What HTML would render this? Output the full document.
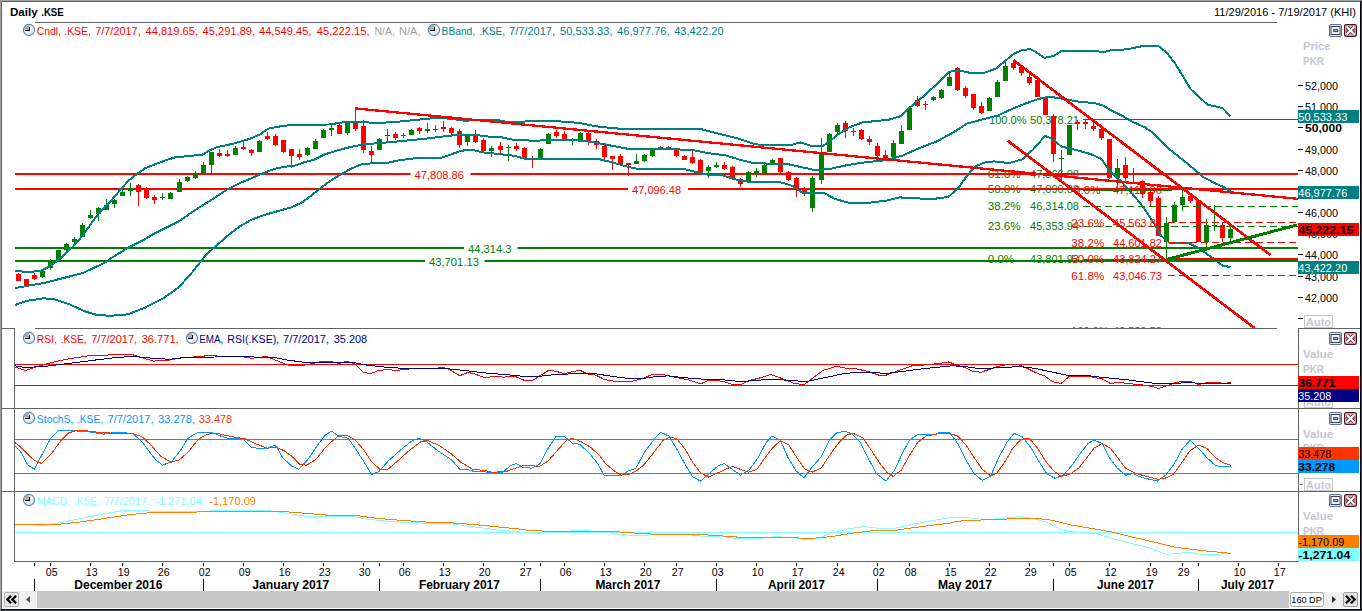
<!DOCTYPE html>
<html><head><meta charset="utf-8"><title>Daily .KSE</title>
<style>html,body{margin:0;padding:0;background:#fff;overflow:hidden}svg{display:block}</style></head>
<body>
<svg width="1362" height="611" viewBox="0 0 1362 611" font-family="&quot;Liberation Sans&quot;, sans-serif" font-size="11">
<rect x="0" y="0" width="1362" height="611" fill="#ffffff" />
<g shape-rendering="crispEdges">
<line x1="35" y1="22.5" x2="1277" y2="22.5" stroke="#626262" stroke-width="1"/>
<line x1="2" y1="328.5" x2="14" y2="328.5" stroke="#626262" stroke-width="1"/>
<line x1="35" y1="328.5" x2="1277" y2="328.5" stroke="#626262" stroke-width="1"/>
<line x1="1298" y1="328.5" x2="1360" y2="328.5" stroke="#626262" stroke-width="1"/>
<line x1="2" y1="408.5" x2="1360" y2="408.5" stroke="#626262" stroke-width="1"/>
<line x1="2" y1="491.5" x2="1360" y2="491.5" stroke="#626262" stroke-width="1"/>
<line x1="14.5" y1="328" x2="14.5" y2="562" stroke="#626262" stroke-width="1"/>
<line x1="14" y1="561.5" x2="1299" y2="561.5" stroke="#626262" stroke-width="1"/>
<line x1="1298.5" y1="328" x2="1298.5" y2="562" stroke="#626262" stroke-width="1"/>
</g>
<defs><linearGradient id="ckg" x1="0" y1="0" x2="1" y2="1"><stop offset="0" stop-color="#c8c8c8"/><stop offset="0.55" stop-color="#f4f8fa"/><stop offset="1" stop-color="#b4d2e2"/></linearGradient><clipPath id="cm"><rect x="15" y="23" width="1283" height="305"/></clipPath></defs>
<g clip-path="url(#cm)" shape-rendering="crispEdges">
<g shape-rendering="auto">
<text x="989" y="124" fill="#008000" font-size="11" textLength="37.5" lengthAdjust="spacingAndGlyphs" >100.0%</text>
<text x="1030" y="124" fill="#008000" font-size="11" textLength="49" lengthAdjust="spacingAndGlyphs" >50,378.21</text>
<text x="987.7" y="178" fill="#008000" font-size="11" textLength="33" lengthAdjust="spacingAndGlyphs" >61.8%</text>
<text x="1030" y="178" fill="#008000" font-size="11" textLength="49" lengthAdjust="spacingAndGlyphs" >47,866.08</text>
<text x="987.7" y="193.3" fill="#008000" font-size="11" textLength="33" lengthAdjust="spacingAndGlyphs" >50.0%</text>
<text x="1030" y="193.3" fill="#008000" font-size="11" textLength="49" lengthAdjust="spacingAndGlyphs" >47,090.00</text>
<text x="987.7" y="210.4" fill="#008000" font-size="11" textLength="33" lengthAdjust="spacingAndGlyphs" >38.2%</text>
<text x="1030" y="210.4" fill="#008000" font-size="11" textLength="49" lengthAdjust="spacingAndGlyphs" >46,314.08</text>
<text x="987.7" y="230.2" fill="#008000" font-size="11" textLength="33" lengthAdjust="spacingAndGlyphs" >23.6%</text>
<text x="1030" y="230.2" fill="#008000" font-size="11" textLength="49" lengthAdjust="spacingAndGlyphs" >45,353.94</text>
<text x="987.7" y="262.8" fill="#008000" font-size="11" textLength="26.5" lengthAdjust="spacingAndGlyphs" >0.0%</text>
<text x="1030" y="262.8" fill="#008000" font-size="11" textLength="49" lengthAdjust="spacingAndGlyphs" >43,801.93</text>
</g>
<line x1="15" y1="248" x2="1298" y2="248" stroke="#008000" stroke-width="2"/>
<line x1="15" y1="261" x2="1298" y2="261" stroke="#008000" stroke-width="2"/>
<line x1="15" y1="174" x2="1298" y2="174" stroke="#ff0000" stroke-width="2"/>
<line x1="15" y1="189" x2="1298" y2="189" stroke="#ff0000" stroke-width="2"/>
<rect x="18" y="273" width="1" height="8" fill="#ff0000" />
<rect x="16" y="274" width="5" height="7" fill="#ff0000" />
<rect x="26" y="279" width="1" height="6" fill="#ff0000" />
<rect x="24" y="279" width="5" height="6" fill="#ff0000" />
<rect x="34" y="273" width="1" height="7" fill="#ff0000" />
<rect x="32" y="275" width="5" height="4" fill="#ff0000" />
<rect x="42" y="270" width="1" height="8" fill="#008000" />
<rect x="40" y="271" width="5" height="6" fill="#008000" />
<rect x="50" y="259" width="1" height="11" fill="#008000" />
<rect x="48" y="260" width="5" height="8" fill="#008000" />
<rect x="58" y="250" width="1" height="11" fill="#008000" />
<rect x="56" y="250" width="5" height="11" fill="#008000" />
<rect x="66" y="243" width="1" height="9" fill="#008000" />
<rect x="64" y="244" width="5" height="6" fill="#008000" />
<rect x="74" y="237" width="1" height="8" fill="#008000" />
<rect x="72" y="239" width="5" height="3" fill="#008000" />
<rect x="82" y="223" width="1" height="14" fill="#008000" />
<rect x="80" y="225" width="5" height="12" fill="#008000" />
<rect x="90" y="210" width="1" height="9" fill="#008000" />
<rect x="88" y="215" width="5" height="3" fill="#008000" />
<rect x="98" y="207" width="1" height="14" fill="#008000" />
<rect x="96" y="208" width="5" height="6" fill="#008000" />
<rect x="106" y="199" width="1" height="11" fill="#008000" />
<rect x="104" y="205" width="5" height="5" fill="#008000" />
<rect x="114" y="199" width="1" height="9" fill="#008000" />
<rect x="112" y="200" width="5" height="4" fill="#008000" />
<rect x="122" y="190" width="1" height="6" fill="#008000" />
<rect x="120" y="192" width="5" height="4" fill="#008000" />
<rect x="130" y="183" width="1" height="13" fill="#008000" />
<rect x="128" y="188" width="5" height="3" fill="#008000" />
<rect x="138" y="184" width="1" height="22" fill="#ff0000" />
<rect x="136" y="185" width="5" height="7" fill="#ff0000" />
<rect x="146" y="187" width="1" height="12" fill="#ff0000" />
<rect x="144" y="188" width="5" height="10" fill="#ff0000" />
<rect x="154" y="195" width="1" height="9" fill="#ff0000" />
<rect x="152" y="197" width="5" height="3" fill="#ff0000" />
<rect x="162" y="193" width="1" height="7" fill="#008000" />
<rect x="160" y="197" width="5" height="1" fill="#008000" />
<rect x="170" y="192" width="1" height="7" fill="#008000" />
<rect x="168" y="193" width="5" height="6" fill="#008000" />
<rect x="179" y="179" width="1" height="13" fill="#008000" />
<rect x="177" y="182" width="5" height="10" fill="#008000" />
<rect x="187" y="176" width="1" height="6" fill="#008000" />
<rect x="185" y="177" width="5" height="4" fill="#008000" />
<rect x="195" y="171" width="1" height="8" fill="#008000" />
<rect x="193" y="174" width="5" height="4" fill="#008000" />
<rect x="203" y="162" width="1" height="11" fill="#008000" />
<rect x="201" y="165" width="5" height="8" fill="#008000" />
<rect x="211" y="152" width="1" height="21" fill="#008000" />
<rect x="209" y="152" width="5" height="13" fill="#008000" />
<rect x="219" y="149" width="1" height="8" fill="#ff0000" />
<rect x="217" y="153" width="5" height="3" fill="#ff0000" />
<rect x="227" y="150" width="1" height="7" fill="#ff0000" />
<rect x="225" y="154" width="5" height="2" fill="#ff0000" />
<rect x="235" y="146" width="1" height="9" fill="#008000" />
<rect x="233" y="148" width="5" height="7" fill="#008000" />
<rect x="243" y="141" width="1" height="9" fill="#ff0000" />
<rect x="241" y="147" width="5" height="2" fill="#ff0000" />
<rect x="251" y="149" width="1" height="7" fill="#ff0000" />
<rect x="249" y="150" width="5" height="3" fill="#ff0000" />
<rect x="259" y="140" width="1" height="12" fill="#008000" />
<rect x="257" y="141" width="5" height="11" fill="#008000" />
<rect x="267" y="132" width="1" height="8" fill="#ff0000" />
<rect x="265" y="136" width="5" height="3" fill="#ff0000" />
<rect x="275" y="134" width="1" height="12" fill="#ff0000" />
<rect x="273" y="136" width="5" height="9" fill="#ff0000" />
<rect x="283" y="140" width="1" height="13" fill="#ff0000" />
<rect x="281" y="140" width="5" height="12" fill="#ff0000" />
<rect x="291" y="149" width="1" height="19" fill="#ff0000" />
<rect x="289" y="149" width="5" height="7" fill="#ff0000" />
<rect x="299" y="149" width="1" height="11" fill="#ff0000" />
<rect x="297" y="154" width="5" height="3" fill="#ff0000" />
<rect x="307" y="147" width="1" height="9" fill="#008000" />
<rect x="305" y="148" width="5" height="7" fill="#008000" />
<rect x="315" y="139" width="1" height="10" fill="#008000" />
<rect x="313" y="141" width="5" height="8" fill="#008000" />
<rect x="323" y="129" width="1" height="9" fill="#008000" />
<rect x="321" y="130" width="5" height="8" fill="#008000" />
<rect x="331" y="125" width="1" height="11" fill="#008000" />
<rect x="329" y="128" width="5" height="2" fill="#008000" />
<rect x="339" y="122" width="1" height="12" fill="#ff0000" />
<rect x="337" y="125" width="5" height="9" fill="#ff0000" />
<rect x="347" y="122" width="1" height="13" fill="#008000" />
<rect x="345" y="123" width="5" height="10" fill="#008000" />
<rect x="355" y="108" width="1" height="23" fill="#ff0000" />
<rect x="353" y="123" width="5" height="6" fill="#ff0000" />
<rect x="363" y="120" width="1" height="33" fill="#ff0000" />
<rect x="361" y="126" width="5" height="24" fill="#ff0000" />
<rect x="371" y="146" width="1" height="17" fill="#ff0000" />
<rect x="369" y="151" width="5" height="4" fill="#ff0000" />
<rect x="379" y="138" width="1" height="12" fill="#008000" />
<rect x="377" y="139" width="5" height="11" fill="#008000" />
<rect x="387" y="129" width="1" height="13" fill="#008000" />
<rect x="385" y="135" width="5" height="1" fill="#008000" />
<rect x="395" y="132" width="1" height="8" fill="#ff0000" />
<rect x="393" y="134" width="5" height="4" fill="#ff0000" />
<rect x="403" y="133" width="1" height="5" fill="#ff0000" />
<rect x="401" y="135" width="5" height="1" fill="#ff0000" />
<rect x="411" y="129" width="1" height="6" fill="#008000" />
<rect x="409" y="130" width="5" height="5" fill="#008000" />
<rect x="419" y="127" width="1" height="7" fill="#ff0000" />
<rect x="417" y="128" width="5" height="3" fill="#ff0000" />
<rect x="427" y="123" width="1" height="10" fill="#008000" />
<rect x="425" y="129" width="5" height="2" fill="#008000" />
<rect x="435" y="125" width="1" height="7" fill="#ff0000" />
<rect x="433" y="129" width="5" height="1" fill="#ff0000" />
<rect x="443" y="121" width="1" height="11" fill="#ff0000" />
<rect x="441" y="127" width="5" height="2" fill="#ff0000" />
<rect x="451" y="127" width="1" height="8" fill="#ff0000" />
<rect x="449" y="128" width="5" height="5" fill="#ff0000" />
<rect x="459" y="129" width="1" height="19" fill="#ff0000" />
<rect x="457" y="131" width="5" height="14" fill="#ff0000" />
<rect x="467" y="135" width="1" height="11" fill="#008000" />
<rect x="465" y="135" width="5" height="7" fill="#008000" />
<rect x="475" y="130" width="1" height="13" fill="#ff0000" />
<rect x="473" y="136" width="5" height="6" fill="#ff0000" />
<rect x="483" y="138" width="1" height="13" fill="#ff0000" />
<rect x="481" y="140" width="5" height="11" fill="#ff0000" />
<rect x="491" y="146" width="1" height="11" fill="#008000" />
<rect x="489" y="148" width="5" height="3" fill="#008000" />
<rect x="500" y="142" width="1" height="12" fill="#ff0000" />
<rect x="498" y="146" width="5" height="4" fill="#ff0000" />
<rect x="508" y="145" width="1" height="16" fill="#008000" />
<rect x="506" y="147" width="5" height="1" fill="#008000" />
<rect x="516" y="143" width="1" height="8" fill="#ff0000" />
<rect x="514" y="146" width="5" height="3" fill="#ff0000" />
<rect x="524" y="147" width="1" height="12" fill="#ff0000" />
<rect x="522" y="148" width="5" height="11" fill="#ff0000" />
<rect x="532" y="156" width="1" height="12" fill="#ff0000" />
<rect x="530" y="158" width="5" height="1" fill="#ff0000" />
<rect x="540" y="148" width="1" height="10" fill="#008000" />
<rect x="538" y="149" width="5" height="9" fill="#008000" />
<rect x="548" y="133" width="1" height="11" fill="#008000" />
<rect x="546" y="134" width="5" height="10" fill="#008000" />
<rect x="556" y="130" width="1" height="8" fill="#ff0000" />
<rect x="554" y="132" width="5" height="4" fill="#ff0000" />
<rect x="564" y="131" width="1" height="9" fill="#ff0000" />
<rect x="562" y="134" width="5" height="6" fill="#ff0000" />
<rect x="572" y="138" width="1" height="7" fill="#008000" />
<rect x="570" y="139" width="5" height="1" fill="#008000" />
<rect x="580" y="132" width="1" height="9" fill="#008000" />
<rect x="578" y="133" width="5" height="7" fill="#008000" />
<rect x="588" y="131" width="1" height="14" fill="#ff0000" />
<rect x="586" y="133" width="5" height="8" fill="#ff0000" />
<rect x="596" y="139" width="1" height="10" fill="#ff0000" />
<rect x="594" y="141" width="5" height="4" fill="#ff0000" />
<rect x="604" y="144" width="1" height="15" fill="#ff0000" />
<rect x="602" y="146" width="5" height="11" fill="#ff0000" />
<rect x="612" y="156" width="1" height="14" fill="#ff0000" />
<rect x="610" y="156" width="5" height="3" fill="#ff0000" />
<rect x="620" y="154" width="1" height="10" fill="#ff0000" />
<rect x="618" y="156" width="5" height="8" fill="#ff0000" />
<rect x="628" y="163" width="1" height="13" fill="#ff0000" />
<rect x="626" y="163" width="5" height="2" fill="#ff0000" />
<rect x="636" y="154" width="1" height="10" fill="#008000" />
<rect x="634" y="161" width="5" height="3" fill="#008000" />
<rect x="644" y="154" width="1" height="8" fill="#008000" />
<rect x="642" y="155" width="5" height="6" fill="#008000" />
<rect x="652" y="148" width="1" height="9" fill="#008000" />
<rect x="650" y="150" width="5" height="6" fill="#008000" />
<rect x="660" y="146" width="1" height="3" fill="#ff0000" />
<rect x="658" y="147" width="5" height="1" fill="#ff0000" />
<rect x="668" y="146" width="1" height="4" fill="#ff0000" />
<rect x="666" y="147" width="5" height="2" fill="#ff0000" />
<rect x="676" y="148" width="1" height="9" fill="#ff0000" />
<rect x="674" y="148" width="5" height="8" fill="#ff0000" />
<rect x="684" y="155" width="1" height="5" fill="#ff0000" />
<rect x="682" y="156" width="5" height="4" fill="#ff0000" />
<rect x="692" y="150" width="1" height="14" fill="#ff0000" />
<rect x="690" y="157" width="5" height="6" fill="#ff0000" />
<rect x="700" y="159" width="1" height="13" fill="#ff0000" />
<rect x="698" y="160" width="5" height="12" fill="#ff0000" />
<rect x="708" y="165" width="1" height="13" fill="#008000" />
<rect x="706" y="167" width="5" height="4" fill="#008000" />
<rect x="716" y="162" width="1" height="6" fill="#008000" />
<rect x="714" y="165" width="5" height="2" fill="#008000" />
<rect x="724" y="162" width="1" height="8" fill="#ff0000" />
<rect x="722" y="165" width="5" height="4" fill="#ff0000" />
<rect x="732" y="166" width="1" height="12" fill="#ff0000" />
<rect x="730" y="167" width="5" height="11" fill="#ff0000" />
<rect x="740" y="178" width="1" height="9" fill="#ff0000" />
<rect x="738" y="179" width="5" height="5" fill="#ff0000" />
<rect x="748" y="171" width="1" height="12" fill="#008000" />
<rect x="746" y="172" width="5" height="10" fill="#008000" />
<rect x="756" y="168" width="1" height="9" fill="#008000" />
<rect x="754" y="171" width="5" height="3" fill="#008000" />
<rect x="764" y="164" width="1" height="9" fill="#008000" />
<rect x="762" y="165" width="5" height="8" fill="#008000" />
<rect x="772" y="159" width="1" height="6" fill="#008000" />
<rect x="770" y="160" width="5" height="4" fill="#008000" />
<rect x="780" y="158" width="1" height="15" fill="#ff0000" />
<rect x="778" y="158" width="5" height="14" fill="#ff0000" />
<rect x="788" y="171" width="1" height="10" fill="#ff0000" />
<rect x="786" y="172" width="5" height="8" fill="#ff0000" />
<rect x="796" y="177" width="1" height="20" fill="#ff0000" />
<rect x="794" y="178" width="5" height="10" fill="#ff0000" />
<rect x="804" y="187" width="1" height="9" fill="#ff0000" />
<rect x="802" y="188" width="5" height="6" fill="#ff0000" />
<rect x="812" y="176" width="1" height="36" fill="#008000" />
<rect x="810" y="178" width="5" height="30" fill="#008000" />
<rect x="821" y="138" width="1" height="46" fill="#008000" />
<rect x="819" y="154" width="5" height="26" fill="#008000" />
<rect x="829" y="133" width="1" height="19" fill="#008000" />
<rect x="827" y="134" width="5" height="18" fill="#008000" />
<rect x="837" y="123" width="1" height="11" fill="#008000" />
<rect x="835" y="125" width="5" height="7" fill="#008000" />
<rect x="845" y="121" width="1" height="17" fill="#ff0000" />
<rect x="843" y="123" width="5" height="8" fill="#ff0000" />
<rect x="853" y="128" width="1" height="8" fill="#008000" />
<rect x="851" y="131" width="5" height="1" fill="#008000" />
<rect x="861" y="129" width="1" height="11" fill="#ff0000" />
<rect x="859" y="130" width="5" height="9" fill="#ff0000" />
<rect x="869" y="136" width="1" height="9" fill="#ff0000" />
<rect x="867" y="139" width="5" height="3" fill="#ff0000" />
<rect x="877" y="143" width="1" height="14" fill="#ff0000" />
<rect x="875" y="146" width="5" height="10" fill="#ff0000" />
<rect x="885" y="150" width="1" height="10" fill="#ff0000" />
<rect x="883" y="155" width="5" height="3" fill="#ff0000" />
<rect x="893" y="140" width="1" height="17" fill="#008000" />
<rect x="891" y="143" width="5" height="14" fill="#008000" />
<rect x="901" y="125" width="1" height="19" fill="#008000" />
<rect x="899" y="131" width="5" height="13" fill="#008000" />
<rect x="909" y="108" width="1" height="22" fill="#008000" />
<rect x="907" y="108" width="5" height="22" fill="#008000" />
<rect x="917" y="96" width="1" height="11" fill="#ff0000" />
<rect x="915" y="100" width="5" height="6" fill="#ff0000" />
<rect x="925" y="101" width="1" height="9" fill="#ff0000" />
<rect x="923" y="104" width="5" height="1" fill="#ff0000" />
<rect x="933" y="96" width="1" height="5" fill="#008000" />
<rect x="931" y="97" width="5" height="3" fill="#008000" />
<rect x="941" y="89" width="1" height="10" fill="#008000" />
<rect x="939" y="90" width="5" height="8" fill="#008000" />
<rect x="949" y="73" width="1" height="13" fill="#008000" />
<rect x="947" y="77" width="5" height="9" fill="#008000" />
<rect x="957" y="67" width="1" height="24" fill="#ff0000" />
<rect x="955" y="68" width="5" height="22" fill="#ff0000" />
<rect x="965" y="86" width="1" height="12" fill="#ff0000" />
<rect x="963" y="88" width="5" height="8" fill="#ff0000" />
<rect x="973" y="94" width="1" height="16" fill="#ff0000" />
<rect x="971" y="94" width="5" height="14" fill="#ff0000" />
<rect x="981" y="102" width="1" height="12" fill="#ff0000" />
<rect x="979" y="106" width="5" height="7" fill="#ff0000" />
<rect x="989" y="97" width="1" height="14" fill="#008000" />
<rect x="987" y="98" width="5" height="13" fill="#008000" />
<rect x="997" y="80" width="1" height="17" fill="#008000" />
<rect x="995" y="82" width="5" height="15" fill="#008000" />
<rect x="1005" y="62" width="1" height="19" fill="#008000" />
<rect x="1003" y="66" width="5" height="15" fill="#008000" />
<rect x="1013" y="60" width="1" height="10" fill="#ff0000" />
<rect x="1011" y="63" width="5" height="5" fill="#ff0000" />
<rect x="1021" y="65" width="1" height="11" fill="#ff0000" />
<rect x="1019" y="67" width="5" height="6" fill="#ff0000" />
<rect x="1029" y="74" width="1" height="11" fill="#ff0000" />
<rect x="1027" y="77" width="5" height="6" fill="#ff0000" />
<rect x="1037" y="76" width="1" height="21" fill="#ff0000" />
<rect x="1035" y="80" width="5" height="17" fill="#ff0000" />
<rect x="1045" y="96" width="1" height="19" fill="#ff0000" />
<rect x="1043" y="98" width="5" height="17" fill="#ff0000" />
<rect x="1053" y="114" width="1" height="48" fill="#ff0000" />
<rect x="1051" y="116" width="5" height="38" fill="#ff0000" />
<rect x="1061" y="150" width="1" height="30" fill="#008000" />
<rect x="1059" y="158" width="5" height="1" fill="#008000" />
<rect x="1069" y="125" width="1" height="30" fill="#008000" />
<rect x="1067" y="125" width="5" height="30" fill="#008000" />
<rect x="1077" y="120" width="1" height="10" fill="#ff0000" />
<rect x="1075" y="122" width="5" height="2" fill="#ff0000" />
<rect x="1085" y="120" width="1" height="9" fill="#ff0000" />
<rect x="1083" y="122" width="5" height="2" fill="#ff0000" />
<rect x="1093" y="121" width="1" height="10" fill="#ff0000" />
<rect x="1091" y="126" width="5" height="3" fill="#ff0000" />
<rect x="1101" y="128" width="1" height="12" fill="#ff0000" />
<rect x="1099" y="129" width="5" height="9" fill="#ff0000" />
<rect x="1109" y="139" width="1" height="40" fill="#ff0000" />
<rect x="1107" y="139" width="5" height="39" fill="#ff0000" />
<rect x="1117" y="159" width="1" height="28" fill="#008000" />
<rect x="1115" y="168" width="5" height="10" fill="#008000" />
<rect x="1125" y="157" width="1" height="25" fill="#ff0000" />
<rect x="1123" y="165" width="5" height="13" fill="#ff0000" />
<rect x="1133" y="168" width="1" height="16" fill="#ff0000" />
<rect x="1131" y="182" width="5" height="2" fill="#ff0000" />
<rect x="1142" y="180" width="1" height="18" fill="#ff0000" />
<rect x="1140" y="181" width="5" height="13" fill="#ff0000" />
<rect x="1150" y="191" width="1" height="15" fill="#ff0000" />
<rect x="1148" y="192" width="5" height="9" fill="#ff0000" />
<rect x="1158" y="196" width="1" height="40" fill="#ff0000" />
<rect x="1156" y="198" width="5" height="38" fill="#ff0000" />
<rect x="1166" y="217" width="1" height="43" fill="#008000" />
<rect x="1164" y="223" width="5" height="19" fill="#008000" />
<rect x="1174" y="202" width="1" height="20" fill="#008000" />
<rect x="1172" y="205" width="5" height="17" fill="#008000" />
<rect x="1182" y="190" width="1" height="21" fill="#008000" />
<rect x="1180" y="197" width="5" height="8" fill="#008000" />
<rect x="1190" y="195" width="1" height="8" fill="#ff0000" />
<rect x="1188" y="196" width="5" height="5" fill="#ff0000" />
<rect x="1198" y="200" width="1" height="42" fill="#ff0000" />
<rect x="1196" y="200" width="5" height="42" fill="#ff0000" />
<rect x="1206" y="219" width="1" height="29" fill="#008000" />
<rect x="1204" y="225" width="5" height="17" fill="#008000" />
<rect x="1214" y="205" width="1" height="26" fill="#008000" />
<rect x="1212" y="225" width="5" height="1" fill="#008000" />
<rect x="1222" y="222" width="1" height="20" fill="#ff0000" />
<rect x="1220" y="225" width="5" height="13" fill="#ff0000" />
<rect x="1230" y="224" width="1" height="18" fill="#008000" />
<rect x="1228" y="229" width="5" height="9" fill="#008000" />
<polyline points="15.0,270.9 26.9,272.0 40.4,271.0 50.5,266.0 60.7,258.0 72.5,247.0 77.6,241.7 86.0,230.7 97.8,214.6 111.4,200.3 121.5,188.4 128.2,181.0 137.4,173.7 144.9,168.4 154.9,164.3 164.9,160.6 174.9,157.4 187.4,156.2 202.3,154.7 210.7,149.8 217.4,147.0 232.6,143.9 249.5,138.9 259.7,134.6 268.1,128.7 278.2,126.7 291.8,124.8 328.9,124.5 345.8,122.0 362.7,122.3 380.0,122.9 396.9,121.8 413.8,120.1 430.7,118.4 440.8,117.9 452.6,119.0 464.5,120.7 481.4,119.9 498.2,120.1 508.4,122.1 520.2,122.4 527.0,121.2 557.4,121.2 579.3,122.9 596.2,126.3 613.5,128.2 628.7,129.4 667.6,129.4 700.5,128.9 708.1,131.1 725.0,135.3 740.2,139.1 752.0,143.3 760.5,145.0 790.9,145.0 800.2,142.4 812.8,146.3 823.0,146.0 829.4,141.5 838.0,134.5 848.8,127.6 862.3,122.5 889.3,119.6 901.1,116.0 909.6,107.6 923.1,96.6 936.6,84.3 949.3,71.8 958.6,70.4 970.4,72.9 983.9,72.9 995.7,68.7 1005.9,60.3 1014.3,53.5 1022.8,49.8 1030.4,49.3 1036.0,52.0 1044.3,57.8 1053.6,56.1 1062.0,50.7 1092.4,51.0 1104.3,51.9 1111.0,50.2 1126.2,49.4 1143.1,46.0 1158.3,46.0 1166.8,52.7 1175.2,63.7 1183.6,77.2 1190.4,89.0 1198.9,96.7 1207.3,104.6 1222.5,108.0 1230.5,116.2" fill="none" stroke="#008080" stroke-width="2" stroke-linejoin="round" />
<polyline points="15.0,288.1 26.9,285.9 43.8,283.1 60.7,278.7 82.6,273.2 94.5,267.5 104.6,262.8 111.4,258.0 128.2,247.6 143.4,240.0 153.6,234.0 178.9,221.4 195.8,209.6 212.5,199.3 227.5,189.3 241.2,182.5 254.9,176.8 264.9,172.5 274.9,168.7 284.9,166.8 294.9,165.6 303.6,162.5 314.8,159.4 324.8,154.4 334.8,151.2 345.8,148.1 362.7,144.4 380.0,143.0 396.9,141.5 413.8,139.8 430.7,138.1 447.6,135.9 461.1,134.8 474.6,134.8 488.1,136.5 501.6,137.3 511.8,139.5 532.0,140.7 548.9,140.3 565.8,140.0 582.7,140.7 596.2,142.7 610.0,145.4 628.7,148.9 650.7,149.2 670.9,148.9 694.6,150.5 708.1,153.1 725.0,155.3 740.2,159.8 752.0,162.7 768.9,163.7 785.8,163.7 802.7,167.4 814.5,170.0 828.5,169.2 848.8,164.8 865.7,162.2 885.9,160.2 902.8,155.5 919.7,147.9 936.6,141.5 953.5,132.3 967.0,123.5 983.9,119.1 997.4,115.7 1009.3,110.1 1026.1,103.3 1038.0,99.1 1048.5,96.7 1060.3,98.3 1077.2,101.4 1094.1,103.1 1102.6,105.3 1111.0,110.3 1122.8,116.2 1133.0,122.0 1144.8,127.2 1153.2,133.0 1170.1,149.8 1187.0,163.3 1203.9,177.4 1214.1,182.8 1224.2,187.3 1230.5,191.5" fill="none" stroke="#008080" stroke-width="2" stroke-linejoin="round" />
<polyline points="15.0,305.0 26.9,300.8 43.8,298.3 53.9,299.1 69.1,304.2 86.0,311.8 97.8,315.2 111.4,315.7 128.2,314.3 145.1,307.6 162.0,299.1 178.9,287.3 192.4,272.1 204.3,256.9 212.7,248.8 222.8,240.0 229.6,234.0 241.2,225.5 252.4,219.3 264.9,214.9 277.4,211.2 291.1,207.4 301.1,203.0 309.8,196.8 319.8,188.7 329.8,181.2 339.8,175.0 349.8,169.3 361.0,164.4 370.0,163.5 379.6,163.3 388.4,162.6 400.3,160.1 413.8,158.4 439.1,158.4 450.9,154.5 461.1,150.8 471.2,149.6 481.4,152.2 498.2,153.9 515.1,155.9 525.3,158.9 548.9,159.3 599.6,159.3 613.5,162.7 628.7,167.1 637.2,168.8 684.5,169.1 696.3,172.2 708.1,174.7 721.6,175.0 735.1,179.3 748.6,181.8 768.9,181.8 782.4,182.6 792.6,186.0 802.7,192.8 823.4,192.6 835.3,199.1 848.8,202.8 869.0,202.8 885.9,200.7 899.5,197.4 919.7,198.5 936.6,198.5 948.4,196.9 958.6,187.6 967.0,175.7 975.5,166.5 983.9,162.6 994.1,161.4 1009.3,163.1 1022.8,159.2 1032.9,149.6 1045.1,136.0 1051.9,138.5 1061.2,146.5 1077.2,150.3 1090.7,154.1 1101.7,159.1 1109.3,170.7 1120.7,181.0 1130.8,192.0 1142.6,206.3 1154.5,224.1 1161.2,235.9 1169.7,243.0 1188.2,243.0 1198.4,247.7 1213.6,258.7 1222.0,265.4 1230.5,267.1" fill="none" stroke="#008080" stroke-width="2" stroke-linejoin="round" />
</g>
<g clip-path="url(#cm)">
<g shape-rendering="crispEdges">
<line x1="1083" y1="119.5" x2="1298" y2="119.5" stroke="#008000" stroke-width="1"/>
<line x1="1083" y1="173.5" x2="1298" y2="173.5" stroke="#008000" stroke-width="1" stroke-dasharray="7 4"/>
<line x1="1083" y1="190.5" x2="1172" y2="190.5" stroke="#008000" stroke-width="1"/>
<line x1="1083" y1="206.5" x2="1298" y2="206.5" stroke="#008000" stroke-width="1" stroke-dasharray="7 4"/>
<line x1="1083" y1="226.5" x2="1298" y2="226.5" stroke="#008000" stroke-width="1" stroke-dasharray="7 4"/>
<line x1="1083" y1="260" x2="1298" y2="260" stroke="#008000" stroke-width="2"/>
<line x1="1168" y1="222.5" x2="1296" y2="222.5" stroke="#ff0000" stroke-width="1" stroke-dasharray="7 4"/>
<line x1="1168" y1="242.5" x2="1296" y2="242.5" stroke="#ff0000" stroke-width="1" stroke-dasharray="7 4"/>
<line x1="1173" y1="258.5" x2="1298" y2="258.5" stroke="#ff0000" stroke-width="1"/>
<line x1="1168" y1="275.5" x2="1296" y2="275.5" stroke="#ff0000" stroke-width="1" stroke-dasharray="7 4"/>
</g>
<g shape-rendering="crispEdges">
<line x1="355" y1="108.4" x2="1298" y2="198.834" stroke="#ff0000" stroke-width="2.3" />
<line x1="1013.6" y1="60.3" x2="1270.5" y2="255" stroke="#ff0000" stroke-width="2.7" />
<line x1="1007.6" y1="140.6" x2="1254.5" y2="328" stroke="#ff0000" stroke-width="2.7" />
<line x1="1166.3" y1="259.6" x2="1297" y2="225" stroke="#008000" stroke-width="3" />
</g>
<rect x="410.5" y="168" width="60" height="12" fill="#fff" />
<text x="414.6" y="178.5" fill="#ff0000" font-size="11" textLength="49.3" lengthAdjust="spacingAndGlyphs" >47,808.86</text>
<rect x="628" y="183" width="60" height="12" fill="#fff" />
<text x="632.1" y="194" fill="#ff0000" font-size="11" textLength="49" lengthAdjust="spacingAndGlyphs" >47,096.48</text>
<rect x="464" y="243" width="53.5" height="11" fill="#fff" />
<rect x="425" y="256" width="59.5" height="11" fill="#fff" />
<text x="1074" y="193.8" fill="#ff0000" font-size="11" textLength="26.5" lengthAdjust="spacingAndGlyphs" >0.0%</text>
<text x="1113" y="193.8" fill="#ff0000" font-size="11" textLength="49" lengthAdjust="spacingAndGlyphs" >47,118.96</text>
<text x="1071.3" y="226.8" fill="#ff0000" font-size="11" textLength="33" lengthAdjust="spacingAndGlyphs" >23.6%</text>
<text x="1113" y="226.8" fill="#ff0000" font-size="11" textLength="49" lengthAdjust="spacingAndGlyphs" >45,563.87</text>
<text x="1071.3" y="246.5" fill="#ff0000" font-size="11" textLength="33" lengthAdjust="spacingAndGlyphs" >38.2%</text>
<text x="1113" y="246.5" fill="#ff0000" font-size="11" textLength="49" lengthAdjust="spacingAndGlyphs" >44,601.82</text>
<text x="1071.3" y="262.6" fill="#ff0000" font-size="11" textLength="33" lengthAdjust="spacingAndGlyphs" >50.0%</text>
<text x="1113" y="262.6" fill="#ff0000" font-size="11" textLength="49" lengthAdjust="spacingAndGlyphs" >43,824.27</text>
<text x="1071.3" y="279.5" fill="#ff0000" font-size="11" textLength="33" lengthAdjust="spacingAndGlyphs" >61.8%</text>
<text x="1113" y="279.5" fill="#ff0000" font-size="11" textLength="49" lengthAdjust="spacingAndGlyphs" >43,046.73</text>
<text x="1071.3" y="334.5" fill="#ff0000" font-size="11" textLength="37.5" lengthAdjust="spacingAndGlyphs" >100.0%</text>
<text x="1113" y="334.5" fill="#ff0000" font-size="11" textLength="49" lengthAdjust="spacingAndGlyphs" >40,529.58</text>
</g>
<text x="468" y="252.5" fill="#008000" font-size="11" textLength="43.5" lengthAdjust="spacingAndGlyphs" >44,314.3</text>
<text x="429" y="265.5" fill="#008000" font-size="11" textLength="50" lengthAdjust="spacingAndGlyphs" >43,701.13</text>
<g shape-rendering="crispEdges">
<line x1="1298" y1="297.5" x2="1303" y2="297.5" stroke="#000" stroke-width="1"/>
<line x1="1298" y1="276.5" x2="1303" y2="276.5" stroke="#000" stroke-width="1"/>
<line x1="1298" y1="254.5" x2="1303" y2="254.5" stroke="#000" stroke-width="1"/>
<line x1="1298" y1="233.5" x2="1303" y2="233.5" stroke="#000" stroke-width="1"/>
<line x1="1298" y1="212.5" x2="1303" y2="212.5" stroke="#000" stroke-width="1"/>
<line x1="1298" y1="191.5" x2="1303" y2="191.5" stroke="#000" stroke-width="1"/>
<line x1="1298" y1="170.5" x2="1303" y2="170.5" stroke="#000" stroke-width="1"/>
<line x1="1298" y1="149.5" x2="1303" y2="149.5" stroke="#000" stroke-width="1"/>
<line x1="1298" y1="127.5" x2="1303" y2="127.5" stroke="#000" stroke-width="1"/>
<line x1="1298" y1="106.5" x2="1303" y2="106.5" stroke="#000" stroke-width="1"/>
<line x1="1298" y1="85.5" x2="1303" y2="85.5" stroke="#000" stroke-width="1"/>
<line x1="1298" y1="318.5" x2="1303" y2="318.5" stroke="#000" stroke-width="1"/>
</g>
<text x="1305" y="301.5" fill="#000" font-size="11" textLength="33" lengthAdjust="spacingAndGlyphs" >42,000</text>
<text x="1305" y="280.5" fill="#000" font-size="11" textLength="33" lengthAdjust="spacingAndGlyphs" >43,000</text>
<text x="1305" y="258.5" fill="#000" font-size="11" textLength="33" lengthAdjust="spacingAndGlyphs" >44,000</text>
<text x="1305" y="237.5" fill="#000" font-size="11" textLength="33" lengthAdjust="spacingAndGlyphs" >45,000</text>
<text x="1305" y="216.5" fill="#000" font-size="11" textLength="33" lengthAdjust="spacingAndGlyphs" >46,000</text>
<text x="1305" y="195.5" fill="#000" font-size="11" textLength="33" lengthAdjust="spacingAndGlyphs" >47,000</text>
<text x="1305" y="174.5" fill="#000" font-size="11" textLength="33" lengthAdjust="spacingAndGlyphs" >48,000</text>
<text x="1305" y="153.5" fill="#000" font-size="11" textLength="33" lengthAdjust="spacingAndGlyphs" >49,000</text>
<text x="1305" y="131.5" fill="#000" font-size="11.5" font-weight="bold" textLength="37" lengthAdjust="spacingAndGlyphs" >50,000</text>
<text x="1305" y="110.5" fill="#000" font-size="11" textLength="33" lengthAdjust="spacingAndGlyphs" >51,000</text>
<text x="1305" y="89.5" fill="#000" font-size="11" textLength="33" lengthAdjust="spacingAndGlyphs" >52,000</text>
<rect x="1298" y="110" width="61" height="13" fill="#008080" shape-rendering="crispEdges"/>
<text x="1298.3" y="120.5" fill="#fff" font-size="11" textLength="49" lengthAdjust="spacingAndGlyphs" >50,533.33</text>
<rect x="1298" y="186" width="61" height="13" fill="#008080" shape-rendering="crispEdges"/>
<text x="1298.3" y="196.5" fill="#fff" font-size="11" textLength="49" lengthAdjust="spacingAndGlyphs" >46,977.76</text>
<rect x="1298" y="223" width="61" height="13" fill="#ff0000" shape-rendering="crispEdges"/>
<text x="1298.3" y="233.5" fill="#000" font-size="11.5" font-weight="bold" textLength="55" lengthAdjust="spacingAndGlyphs" >45,222.15</text>
<rect x="1298" y="261" width="61" height="13" fill="#008080" shape-rendering="crispEdges"/>
<text x="1298.3" y="271.5" fill="#fff" font-size="11" textLength="49" lengthAdjust="spacingAndGlyphs" >43,422.20</text>
<text x="1303" y="50" fill="#c6c6d0" font-size="11.5" font-weight="bold" textLength="27.5" lengthAdjust="spacingAndGlyphs" >Price</text>
<text x="1303" y="65" fill="#c6c6d0" font-size="11.5" font-weight="bold" textLength="21" lengthAdjust="spacingAndGlyphs" >PKR</text>
<rect x="1304.5" y="315.5" width="28" height="12" fill="#fff" stroke="#c8c8c8" stroke-width="1" shape-rendering="crispEdges"/>
<text x="1306" y="325.5" fill="#c6c6d0" font-size="11.5" font-weight="bold" textLength="25" lengthAdjust="spacingAndGlyphs" >Auto</text>
<g transform="translate(1329,24)">
<rect x="0.5" y="0.5" width="12" height="12" rx="1.5" fill="#dfe9f5" stroke="#5f7391"/>
<rect x="2" y="2.5" width="9" height="8" fill="#f3f3f3" stroke="#3c4258"/>
<rect x="4.7" y="5.6" width="4" height="2" fill="#a8c8e8" stroke="#3c4258"/>
</g>
<g transform="translate(1344,24)">
<rect x="0.6" y="0.6" width="11.8" height="11.8" rx="1.6" fill="#f2b9aa" stroke="#4a1420" stroke-width="1.2"/>
<rect x="1.8" y="4" width="9.4" height="5" fill="#e2694a"/>
<path d="M3.3 3.3 L9.7 9.7 M9.7 3.3 L3.3 9.7" stroke="#3c4258" stroke-width="3.8"/>
<path d="M3.2 3.2 L9.8 9.8 M9.8 3.2 L3.2 9.8" stroke="#ffffff" stroke-width="2"/>
</g>
<text x="10" y="16" fill="#000" font-size="11" font-weight="bold" textLength="27.6" lengthAdjust="spacingAndGlyphs" >Daily</text>
<text x="41.2" y="16" fill="#000" font-size="11" font-weight="bold" textLength="22.6" lengthAdjust="spacingAndGlyphs" >.KSE</text>
<text x="1214" y="16" fill="#000" font-size="11" textLength="142" lengthAdjust="spacingAndGlyphs" >11/29/2016 - 7/19/2017 (KHI)</text>
<g transform="translate(29,30)">
<circle r="5.6" fill="url(#ckg)" stroke="#5f86ad" stroke-width="1.1"/>
<path d="M0 0 L-5 0 A5 5 0 0 1 0 -5 Z" fill="#a4a4a4" opacity="0.85"/>
<rect x="-4" y="0" width="5" height="1" fill="#000"/><rect x="0" y="-3" width="1" height="4" fill="#000"/>
</g>
<text x="36.8" y="34.8" fill="#ff0000" font-size="11" textLength="24" lengthAdjust="spacingAndGlyphs" >Cndl,</text>
<text x="64.3" y="34.8" fill="#ff0000" font-size="11" textLength="26.5" lengthAdjust="spacingAndGlyphs" >.KSE,</text>
<text x="95.2" y="34.8" fill="#ff0000" font-size="11" textLength="45.5" lengthAdjust="spacingAndGlyphs" >7/7/2017,</text>
<text x="145.5" y="34.8" fill="#ff0000" font-size="11" textLength="52.5" lengthAdjust="spacingAndGlyphs" >44,819.65,</text>
<text x="202.6" y="34.8" fill="#ff0000" font-size="11" textLength="52.5" lengthAdjust="spacingAndGlyphs" >45,291.89,</text>
<text x="259" y="34.8" fill="#ff0000" font-size="11" textLength="52.5" lengthAdjust="spacingAndGlyphs" >44,549.45,</text>
<text x="316.7" y="34.8" fill="#ff0000" font-size="11" textLength="53" lengthAdjust="spacingAndGlyphs" >45,222.15,</text>
<text x="374.5" y="34.8" fill="#a0a0a0" font-size="11" textLength="20.5" lengthAdjust="spacingAndGlyphs" >N/A,</text>
<text x="399" y="34.8" fill="#a0a0a0" font-size="11" textLength="21.5" lengthAdjust="spacingAndGlyphs" >N/A,</text>
<g transform="translate(434,30)">
<circle r="5.6" fill="url(#ckg)" stroke="#5f86ad" stroke-width="1.1"/>
<path d="M0 0 L-5 0 A5 5 0 0 1 0 -5 Z" fill="#a4a4a4" opacity="0.85"/>
<rect x="-4" y="0" width="5" height="1" fill="#000"/><rect x="0" y="-3" width="1" height="4" fill="#000"/>
</g>
<text x="441.6" y="34.8" fill="#008080" font-size="11" textLength="33.5" lengthAdjust="spacingAndGlyphs" >BBand,</text>
<text x="479.1" y="34.8" fill="#008080" font-size="11" textLength="26" lengthAdjust="spacingAndGlyphs" >.KSE,</text>
<text x="509" y="34.8" fill="#008080" font-size="11" textLength="46" lengthAdjust="spacingAndGlyphs" >7/7/2017,</text>
<text x="560" y="34.8" fill="#008080" font-size="11" textLength="52.5" lengthAdjust="spacingAndGlyphs" >50,533.33,</text>
<text x="617.1" y="34.8" fill="#008080" font-size="11" textLength="52.5" lengthAdjust="spacingAndGlyphs" >46,977.76,</text>
<text x="674.2" y="34.8" fill="#008080" font-size="11" textLength="49.4" lengthAdjust="spacingAndGlyphs" >43,422.20</text>
<g shape-rendering="crispEdges">
<line x1="15" y1="364.5" x2="1298" y2="364.5" stroke="#ff0000" stroke-width="1"/>
<line x1="15" y1="385.5" x2="1298" y2="385.5" stroke="#ff0000" stroke-width="1"/>
<polyline points="14.7,367.0 25.3,370.5 38.2,366.3 52.3,362.3 68.7,358.8 87.5,356.0 104.0,355.3 120.4,354.1 132.2,354.6 141.6,357.6 153.3,361.1 169.8,360.0 183.9,357.2 198.0,356.9 209.7,355.3 221.5,356.4 240.3,356.4 252.0,358.3 266.1,356.4 277.9,361.1 289.6,365.8 301.4,365.8 313.1,363.5 320.0,361.9 329.4,361.1 338.8,363.5 347.0,361.1 355.2,364.2 363.5,372.4 370.5,373.6 378.7,370.5 388.1,369.4 395.2,370.5 406.9,369.4 414.0,368.2 437.5,368.2 442.2,367.0 449.2,369.4 459.8,375.7 468.0,372.4 475.1,374.1 484.5,377.6 496.2,376.4 503.3,377.1 515.0,376.4 524.4,380.4 532.6,380.4 540.9,375.2 549.1,370.1 557.3,371.7 564.4,373.6 572.6,371.7 579.6,370.1 587.9,374.1 596.1,375.2 604.3,379.5 616.1,381.6 630.0,381.7 641.7,378.8 652.3,374.5 662.9,374.5 674.6,377.1 688.7,379.9 700.5,383.9 708.7,380.4 721.6,381.1 733.4,384.6 740.4,384.6 749.8,380.4 759.2,378.1 771.0,374.5 782.7,378.8 794.5,383.5 803.9,384.6 813.3,377.6 822.7,370.5 836.8,366.3 846.2,368.2 855.6,368.7 867.3,371.3 879.1,375.2 886.1,375.2 895.5,371.7 912.0,365.8 928.4,364.7 940.0,363.3 948.2,361.9 956.4,364.7 963.5,367.0 972.9,371.3 981.1,372.2 989.3,369.4 998.7,366.3 1008.1,364.2 1019.9,365.1 1026.9,368.2 1036.3,372.9 1044.6,375.9 1052.8,381.8 1061.0,383.5 1069.2,376.4 1088.0,376.4 1102.1,378.8 1110.3,383.5 1118.6,382.3 1128.0,383.5 1139.7,384.6 1151.5,386.3 1158.5,388.6 1166.7,385.8 1175.0,382.8 1184.4,381.1 1191.4,381.6 1198.5,384.6 1207.9,382.3 1217.3,382.3 1224.3,383.5 1230.6,382.3" fill="none" stroke="#ff0000" stroke-width="1" stroke-linejoin="round" />
<polyline points="14.7,365.8 25.3,367.5 45.2,366.3 68.7,363.5 92.2,360.4 115.7,357.6 132.2,356.4 151.0,358.1 169.8,359.3 183.9,357.6 209.7,357.2 240.3,356.0 256.7,357.2 273.2,357.2 287.3,360.0 303.7,362.3 324.9,363.0 355.2,362.8 367.0,365.1 390.5,367.7 414.0,368.7 442.2,368.2 461.0,370.1 484.5,372.9 508.0,374.8 524.4,376.4 538.5,376.4 555.0,374.5 578.5,373.6 594.9,373.6 609.0,375.9 625.5,378.1 640.0,378.8 653.5,376.9 667.6,375.9 695.8,378.8 724.0,379.9 740.4,381.6 771.0,379.2 789.8,380.4 806.2,381.6 822.7,378.1 841.5,374.1 855.6,372.2 872.0,372.2 886.1,373.6 900.2,371.7 923.7,368.7 940.0,367.0 951.7,365.8 963.5,366.3 979.9,368.7 998.7,367.7 1019.9,366.6 1034.0,368.2 1050.4,371.7 1066.9,375.2 1088.0,375.7 1104.5,377.6 1128.0,379.9 1151.5,383.0 1165.6,383.9 1175.0,383.5 1189.1,382.3 1198.5,383.5 1230.6,383.2" fill="none" stroke="#000080" stroke-width="1" stroke-linejoin="round" />
</g>
<g transform="translate(29,338)">
<circle r="5.6" fill="url(#ckg)" stroke="#5f86ad" stroke-width="1.1"/>
<path d="M0 0 L-5 0 A5 5 0 0 1 0 -5 Z" fill="#a4a4a4" opacity="0.85"/>
<rect x="-4" y="0" width="5" height="1" fill="#000"/><rect x="0" y="-3" width="1" height="4" fill="#000"/>
</g>
<text x="36.8" y="343.3" fill="#ff0000" font-size="11" textLength="20" lengthAdjust="spacingAndGlyphs" >RSI,</text>
<text x="60.7" y="343.3" fill="#ff0000" font-size="11" textLength="26" lengthAdjust="spacingAndGlyphs" >.KSE,</text>
<text x="91.2" y="343.3" fill="#ff0000" font-size="11" textLength="46" lengthAdjust="spacingAndGlyphs" >7/7/2017,</text>
<text x="141.7" y="343.3" fill="#ff0000" font-size="11" textLength="37" lengthAdjust="spacingAndGlyphs" >36.771,</text>
<g transform="translate(192,338)">
<circle r="5.6" fill="url(#ckg)" stroke="#5f86ad" stroke-width="1.1"/>
<path d="M0 0 L-5 0 A5 5 0 0 1 0 -5 Z" fill="#a4a4a4" opacity="0.85"/>
<rect x="-4" y="0" width="5" height="1" fill="#000"/><rect x="0" y="-3" width="1" height="4" fill="#000"/>
</g>
<text x="199.3" y="343.3" fill="#000080" font-size="11" textLength="24" lengthAdjust="spacingAndGlyphs" >EMA,</text>
<text x="227.3" y="343.3" fill="#000080" font-size="11" textLength="52" lengthAdjust="spacingAndGlyphs" >RSI(.KSE),</text>
<text x="283" y="343.3" fill="#000080" font-size="11" textLength="46" lengthAdjust="spacingAndGlyphs" >7/7/2017,</text>
<text x="333.8" y="343.3" fill="#000080" font-size="11" textLength="33.4" lengthAdjust="spacingAndGlyphs" >35.208</text>
<g transform="translate(1329,332)">
<rect x="0.5" y="0.5" width="12" height="12" rx="1.5" fill="#dfe9f5" stroke="#5f7391"/>
<rect x="2" y="2.5" width="9" height="8" fill="#f3f3f3" stroke="#3c4258"/>
<rect x="4.7" y="5.6" width="4" height="2" fill="#a8c8e8" stroke="#3c4258"/>
</g>
<g transform="translate(1344,332)">
<rect x="0.6" y="0.6" width="11.8" height="11.8" rx="1.6" fill="#f2b9aa" stroke="#4a1420" stroke-width="1.2"/>
<rect x="1.8" y="4" width="9.4" height="5" fill="#e2694a"/>
<path d="M3.3 3.3 L9.7 9.7 M9.7 3.3 L3.3 9.7" stroke="#3c4258" stroke-width="3.8"/>
<path d="M3.2 3.2 L9.8 9.8 M9.8 3.2 L3.2 9.8" stroke="#ffffff" stroke-width="2"/>
</g>
<text x="1303" y="358" fill="#c6c6d0" font-size="11.5" font-weight="bold" >Value</text>
<text x="1303" y="372.5" fill="#c6c6d0" font-size="11.5" font-weight="bold" textLength="21" lengthAdjust="spacingAndGlyphs" >PKR</text>
<rect x="1304.5" y="395.5" width="28" height="12" fill="#fff" stroke="#c8c8c8" stroke-width="1" shape-rendering="crispEdges"/>
<text x="1306" y="405.5" fill="#c6c6d0" font-size="11.5" font-weight="bold" textLength="25" lengthAdjust="spacingAndGlyphs" >Auto</text>
<rect x="1298" y="376" width="61" height="13" fill="#ff0000" shape-rendering="crispEdges"/>
<text x="1298.3" y="386.5" fill="#000" font-size="11.5" font-weight="bold" textLength="37" lengthAdjust="spacingAndGlyphs" >36.771</text>
<rect x="1298" y="389" width="61" height="13" fill="#000080" shape-rendering="crispEdges"/>
<text x="1298.3" y="399.5" fill="#fff" font-size="11" textLength="33" lengthAdjust="spacingAndGlyphs" >35.208</text>
<g shape-rendering="crispEdges">
<line x1="15" y1="439.5" x2="1298" y2="439.5" stroke="#0099ff" stroke-width="1"/>
<line x1="15" y1="473.5" x2="1298" y2="473.5" stroke="#0099ff" stroke-width="1"/>
<polyline points="14.7,445.4 20.6,451.7 27.6,464.6 34.2,469.3 42.9,452.9 51.1,437.6 58.2,431.0 64.0,430.1 87.5,431.7 104.0,434.1 115.7,432.2 132.2,433.4 140.4,440.0 148.6,450.5 155.7,459.9 162.7,465.3 172.1,461.1 180.3,450.5 188.6,437.6 198.0,432.5 212.1,432.5 221.5,436.4 228.5,438.3 242.6,438.8 252.0,447.7 266.1,448.7 275.5,445.1 282.6,457.6 292.0,466.3 299.0,469.3 308.4,458.8 317.8,444.7 324.9,435.3 331.7,431.0 338.8,436.4 348.2,438.3 355.2,448.2 363.5,461.1 371.7,474.5 378.7,471.7 388.1,461.1 399.9,450.5 411.6,441.1 418.7,438.3 425.7,441.1 437.5,450.5 451.6,459.9 459.8,469.3 468.0,469.8 475.1,471.7 484.5,471.7 489.2,472.9 502.1,472.9 510.3,465.8 516.2,463.5 522.1,467.0 531.5,468.2 539.7,464.2 546.7,450.5 556.1,436.4 564.4,436.4 572.6,443.5 579.6,444.2 590.2,454.1 598.4,464.6 604.3,475.7 620.8,475.7 627.8,471.2 635.9,468.2 644.1,452.9 653.5,440.0 660.5,432.2 668.8,436.0 677.0,449.4 685.2,464.6 692.3,476.4 700.5,481.1 709.9,472.9 718.1,465.8 724.0,463.5 732.2,469.3 740.4,475.2 749.8,469.3 758.1,457.6 766.3,442.3 772.2,436.0 780.4,440.0 787.4,456.4 795.7,470.5 803.9,478.0 812.1,467.0 821.5,456.4 829.7,440.0 836.8,432.9 845.0,431.0 852.0,434.1 860.3,442.3 868.5,458.8 876.7,474.0 886.1,481.1 894.3,470.5 902.6,452.9 909.6,440.0 917.8,434.6 935.5,434.1 940.2,432.2 949.4,432.2 957.6,443.5 965.8,459.9 974.1,473.6 982.3,480.4 990.5,476.4 998.7,457.6 1007.0,442.3 1014.0,433.4 1022.2,436.9 1030.5,447.0 1038.7,461.1 1046.9,474.0 1055.1,478.3 1063.4,475.2 1071.6,465.8 1079.8,454.1 1088.0,443.5 1093.9,440.0 1102.1,443.5 1109.2,457.6 1117.4,468.2 1125.6,475.2 1132.7,473.6 1142.1,477.6 1150.3,479.4 1157.3,481.1 1165.6,475.2 1173.8,464.6 1182.0,449.4 1190.2,440.0 1198.5,448.2 1206.7,457.6 1214.9,465.1 1219.6,466.3 1230.6,466.3" fill="none" stroke="#0099ff" stroke-width="1" stroke-linejoin="round" />
<polyline points="14.7,442.3 20.6,447.0 27.6,454.1 34.2,460.4 41.7,463.5 51.1,454.1 60.5,441.1 68.7,432.9 75.8,430.6 87.5,431.0 104.0,432.9 132.2,433.4 141.6,436.4 151.0,445.1 160.4,455.9 171.0,462.3 179.2,459.9 188.6,451.7 198.0,439.5 207.4,434.1 216.8,433.4 230.9,436.4 245.0,438.8 256.7,444.2 267.3,448.2 275.5,447.0 283.7,450.5 292.0,456.4 300.2,464.6 306.5,465.1 315.5,459.9 324.9,448.2 329.4,443.5 338.8,435.7 347.0,435.3 355.2,440.0 363.5,449.4 371.7,461.8 379.9,469.3 387.0,470.0 397.5,461.1 409.3,450.5 421.0,441.6 428.1,440.7 439.8,445.8 451.6,454.1 461.0,462.3 472.7,469.3 484.5,470.5 491.5,472.2 505.6,471.7 515.0,468.2 524.4,465.3 539.7,466.3 547.9,461.1 557.3,450.5 566.7,440.0 572.6,438.3 580.8,441.6 590.2,447.0 598.4,454.1 605.5,463.5 613.7,470.5 620.8,475.2 630.2,474.0 635.9,471.2 644.1,464.6 653.5,452.9 662.9,440.7 669.9,436.9 677.0,438.8 685.2,449.4 693.4,463.5 700.5,472.9 708.7,477.1 719.3,472.2 732.2,466.3 740.4,469.3 748.7,472.2 756.9,469.3 765.1,457.6 773.3,447.0 780.4,440.7 788.6,444.7 796.8,457.6 805.0,469.3 812.1,472.2 821.5,467.7 829.7,455.2 839.1,442.3 846.2,435.3 853.2,433.4 862.6,437.6 870.8,449.4 879.1,462.3 887.3,472.9 893.2,476.4 901.4,470.0 909.6,455.2 917.8,442.3 926.1,436.0 940.2,433.4 949.4,433.4 957.6,436.0 965.8,444.7 974.1,457.6 982.3,469.3 990.5,475.7 996.4,473.6 1004.6,462.3 1012.8,448.2 1021.1,439.3 1029.3,438.3 1037.5,448.2 1045.7,461.1 1054.0,471.2 1061.0,476.4 1070.4,474.0 1078.6,468.2 1086.9,457.6 1093.9,448.2 1102.1,443.5 1110.3,448.2 1118.6,458.8 1125.6,468.2 1135.0,472.9 1142.1,475.2 1151.5,477.6 1158.5,479.4 1165.6,478.0 1173.8,474.0 1182.0,462.3 1190.2,450.5 1198.5,445.1 1206.7,448.2 1214.9,457.1 1223.1,462.8 1230.6,465.3" fill="none" stroke="#ff3300" stroke-width="1" stroke-linejoin="round" />
</g>
<g transform="translate(29,418)">
<circle r="5.6" fill="url(#ckg)" stroke="#5f86ad" stroke-width="1.1"/>
<path d="M0 0 L-5 0 A5 5 0 0 1 0 -5 Z" fill="#a4a4a4" opacity="0.85"/>
<rect x="-4" y="0" width="5" height="1" fill="#000"/><rect x="0" y="-3" width="1" height="4" fill="#000"/>
</g>
<text x="36.8" y="423.3" fill="#0099ff" font-size="11" textLength="36.5" lengthAdjust="spacingAndGlyphs" >StochS,</text>
<text x="77" y="423.3" fill="#0099ff" font-size="11" textLength="26" lengthAdjust="spacingAndGlyphs" >.KSE,</text>
<text x="107.5" y="423.3" fill="#0099ff" font-size="11" textLength="46" lengthAdjust="spacingAndGlyphs" >7/7/2017,</text>
<text x="158" y="423.3" fill="#0099ff" font-size="11" textLength="37" lengthAdjust="spacingAndGlyphs" >33.278,</text>
<text x="198.8" y="423.3" fill="#ff3300" font-size="11" textLength="33.2" lengthAdjust="spacingAndGlyphs" >33.478</text>
<g transform="translate(1329,412)">
<rect x="0.5" y="0.5" width="12" height="12" rx="1.5" fill="#dfe9f5" stroke="#5f7391"/>
<rect x="2" y="2.5" width="9" height="8" fill="#f3f3f3" stroke="#3c4258"/>
<rect x="4.7" y="5.6" width="4" height="2" fill="#a8c8e8" stroke="#3c4258"/>
</g>
<g transform="translate(1344,412)">
<rect x="0.6" y="0.6" width="11.8" height="11.8" rx="1.6" fill="#f2b9aa" stroke="#4a1420" stroke-width="1.2"/>
<rect x="1.8" y="4" width="9.4" height="5" fill="#e2694a"/>
<path d="M3.3 3.3 L9.7 9.7 M9.7 3.3 L3.3 9.7" stroke="#3c4258" stroke-width="3.8"/>
<path d="M3.2 3.2 L9.8 9.8 M9.8 3.2 L3.2 9.8" stroke="#ffffff" stroke-width="2"/>
</g>
<text x="1303" y="437.5" fill="#c6c6d0" font-size="11.5" font-weight="bold" >Value</text>
<text x="1303" y="452" fill="#c6c6d0" font-size="11.5" font-weight="bold" textLength="21" lengthAdjust="spacingAndGlyphs" >PKR</text>
<g shape-rendering="crispEdges">
<line x1="1298" y1="484.5" x2="1303" y2="484.5" stroke="#a0a0a0" stroke-width="1"/>
</g>
<rect x="1304.5" y="478.5" width="28" height="12" fill="#fff" stroke="#c8c8c8" stroke-width="1" shape-rendering="crispEdges"/>
<text x="1306" y="488.5" fill="#c6c6d0" font-size="11.5" font-weight="bold" textLength="25" lengthAdjust="spacingAndGlyphs" >Auto</text>
<rect x="1298" y="447" width="61" height="13" fill="#ff3300" shape-rendering="crispEdges"/>
<text x="1298.3" y="457.5" fill="#000" font-size="11" textLength="33" lengthAdjust="spacingAndGlyphs" >33.478</text>
<rect x="1298" y="460" width="61" height="13" fill="#0099ff" shape-rendering="crispEdges"/>
<text x="1298.3" y="470.5" fill="#000" font-size="11.5" font-weight="bold" textLength="37" lengthAdjust="spacingAndGlyphs" >33.278</text>
<g shape-rendering="crispEdges">
<line x1="15" y1="532.5" x2="1298" y2="532.5" stroke="#80ffff" stroke-width="1"/>
<polyline points="14.7,524.8 45.2,525.1 57.0,523.2 80.5,518.5 104.0,513.8 120.4,511.0 141.6,510.3 160.4,511.9 198.0,511.9 214.4,510.7 268.5,510.7 282.6,512.6 303.7,516.1 330.0,516.6 350.5,516.1 367.0,519.2 390.5,521.6 425.7,523.2 449.2,523.7 472.7,526.7 496.2,529.8 519.7,532.1 536.2,533.3 555.0,532.1 583.2,530.2 602.0,532.1 616.1,533.8 630.2,535.4 653.5,534.9 688.7,534.5 700.5,536.1 724.0,536.8 740.4,538.9 759.2,538.5 775.7,536.6 794.5,537.8 806.2,539.6 818.0,538.5 832.1,533.1 848.5,528.6 865.0,526.7 879.1,528.4 893.2,528.6 912.0,524.4 935.5,520.1 951.7,517.3 968.2,517.8 987.0,519.7 1005.8,518.0 1019.9,516.6 1034.0,518.5 1045.7,522.0 1062.2,530.2 1081.0,532.6 1095.1,533.3 1113.9,538.9 1128.0,542.7 1146.8,547.2 1165.6,554.2 1177.3,553.7 1189.1,552.1 1198.5,554.2 1217.3,554.2 1230.6,553.7" fill="none" stroke="#80ffff" stroke-width="1" stroke-linejoin="round" />
<polyline points="14.7,524.4 57.0,524.4 80.5,522.0 104.0,518.5 127.5,515.0 143.9,513.1 174.5,512.2 209.7,511.9 245.0,511.4 280.2,511.4 303.7,513.1 330.0,515.4 355.2,515.4 378.7,518.5 402.2,520.4 425.7,522.0 449.2,522.7 472.7,524.4 496.2,526.7 519.7,529.1 531.5,530.7 555.0,531.4 613.7,531.4 625.5,532.6 640.0,533.3 653.5,534.2 700.5,534.5 724.0,536.1 747.5,537.8 794.5,537.8 810.9,538.5 829.7,536.8 853.2,533.1 876.7,530.2 895.5,530.2 912.0,527.9 935.5,524.8 950.0,523.2 956.4,521.3 975.2,520.1 998.7,519.7 1019.9,518.0 1038.7,518.5 1052.8,520.4 1071.6,525.1 1092.7,528.6 1111.5,531.9 1128.0,536.1 1151.5,541.5 1175.0,547.2 1193.8,549.7 1210.2,551.4 1230.6,553.3" fill="none" stroke="#ff8000" stroke-width="1" stroke-linejoin="round" />
</g>
<g transform="translate(29,500)">
<circle r="5.6" fill="url(#ckg)" stroke="#5f86ad" stroke-width="1.1"/>
<path d="M0 0 L-5 0 A5 5 0 0 1 0 -5 Z" fill="#a4a4a4" opacity="0.85"/>
<rect x="-4" y="0" width="5" height="1" fill="#000"/><rect x="0" y="-3" width="1" height="4" fill="#000"/>
</g>
<text x="37" y="505.2" fill="#80ffff" font-size="11" textLength="33" lengthAdjust="spacingAndGlyphs" >MACD,</text>
<text x="73.9" y="505.2" fill="#80ffff" font-size="11" textLength="26" lengthAdjust="spacingAndGlyphs" >.KSE,</text>
<text x="104" y="505.2" fill="#80ffff" font-size="11" textLength="46" lengthAdjust="spacingAndGlyphs" >7/7/2017,</text>
<text x="155" y="505.2" fill="#80ffff" font-size="11" textLength="50" lengthAdjust="spacingAndGlyphs" >-1,271.04,</text>
<text x="209.2" y="505.2" fill="#ff8000" font-size="11" textLength="46.8" lengthAdjust="spacingAndGlyphs" >-1,170.09</text>
<g transform="translate(1329,494)">
<rect x="0.5" y="0.5" width="12" height="12" rx="1.5" fill="#dfe9f5" stroke="#5f7391"/>
<rect x="2" y="2.5" width="9" height="8" fill="#f3f3f3" stroke="#3c4258"/>
<rect x="4.7" y="5.6" width="4" height="2" fill="#a8c8e8" stroke="#3c4258"/>
</g>
<g transform="translate(1344,494)">
<rect x="0.6" y="0.6" width="11.8" height="11.8" rx="1.6" fill="#f2b9aa" stroke="#4a1420" stroke-width="1.2"/>
<rect x="1.8" y="4" width="9.4" height="5" fill="#e2694a"/>
<path d="M3.3 3.3 L9.7 9.7 M9.7 3.3 L3.3 9.7" stroke="#3c4258" stroke-width="3.8"/>
<path d="M3.2 3.2 L9.8 9.8 M9.8 3.2 L3.2 9.8" stroke="#ffffff" stroke-width="2"/>
</g>
<text x="1303" y="520" fill="#c6c6d0" font-size="11.5" font-weight="bold" >Value</text>
<text x="1303" y="534.5" fill="#c6c6d0" font-size="11.5" font-weight="bold" textLength="21" lengthAdjust="spacingAndGlyphs" >PKR</text>
<rect x="1298" y="535" width="61" height="13" fill="#ff8000" shape-rendering="crispEdges"/>
<text x="1298.3" y="545.5" fill="#000" font-size="11" textLength="46" lengthAdjust="spacingAndGlyphs" >-1,170.09</text>
<rect x="1298" y="548" width="61" height="13" fill="#80ffff" shape-rendering="crispEdges"/>
<text x="1298.3" y="558.5" fill="#000" font-size="11.5" font-weight="bold" textLength="52" lengthAdjust="spacingAndGlyphs" >-1,271.04</text>
<g shape-rendering="crispEdges">
<line x1="50.5" y1="563" x2="50.5" y2="566" stroke="#000" stroke-width="1"/>
<line x1="90.5" y1="563" x2="90.5" y2="566" stroke="#000" stroke-width="1"/>
<line x1="122.5" y1="563" x2="122.5" y2="566" stroke="#000" stroke-width="1"/>
<line x1="162.5" y1="563" x2="162.5" y2="566" stroke="#000" stroke-width="1"/>
<line x1="243.5" y1="563" x2="243.5" y2="566" stroke="#000" stroke-width="1"/>
<line x1="283.5" y1="563" x2="283.5" y2="566" stroke="#000" stroke-width="1"/>
<line x1="323.5" y1="563" x2="323.5" y2="566" stroke="#000" stroke-width="1"/>
<line x1="363.5" y1="563" x2="363.5" y2="566" stroke="#000" stroke-width="1"/>
<line x1="403.5" y1="563" x2="403.5" y2="566" stroke="#000" stroke-width="1"/>
<line x1="443.5" y1="563" x2="443.5" y2="566" stroke="#000" stroke-width="1"/>
<line x1="483.5" y1="563" x2="483.5" y2="566" stroke="#000" stroke-width="1"/>
<line x1="524.5" y1="563" x2="524.5" y2="566" stroke="#000" stroke-width="1"/>
<line x1="564.5" y1="563" x2="564.5" y2="566" stroke="#000" stroke-width="1"/>
<line x1="604.5" y1="563" x2="604.5" y2="566" stroke="#000" stroke-width="1"/>
<line x1="644.5" y1="563" x2="644.5" y2="566" stroke="#000" stroke-width="1"/>
<line x1="676.5" y1="563" x2="676.5" y2="566" stroke="#000" stroke-width="1"/>
<line x1="756.5" y1="563" x2="756.5" y2="566" stroke="#000" stroke-width="1"/>
<line x1="796.5" y1="563" x2="796.5" y2="566" stroke="#000" stroke-width="1"/>
<line x1="837.5" y1="563" x2="837.5" y2="566" stroke="#000" stroke-width="1"/>
<line x1="909.5" y1="563" x2="909.5" y2="566" stroke="#000" stroke-width="1"/>
<line x1="949.5" y1="563" x2="949.5" y2="566" stroke="#000" stroke-width="1"/>
<line x1="989.5" y1="563" x2="989.5" y2="566" stroke="#000" stroke-width="1"/>
<line x1="1029.5" y1="563" x2="1029.5" y2="566" stroke="#000" stroke-width="1"/>
<line x1="1069.5" y1="563" x2="1069.5" y2="566" stroke="#000" stroke-width="1"/>
<line x1="1109.5" y1="563" x2="1109.5" y2="566" stroke="#000" stroke-width="1"/>
<line x1="1150.5" y1="563" x2="1150.5" y2="566" stroke="#000" stroke-width="1"/>
<line x1="1182.5" y1="563" x2="1182.5" y2="566" stroke="#000" stroke-width="1"/>
<line x1="1238.5" y1="563" x2="1238.5" y2="566" stroke="#000" stroke-width="1"/>
<line x1="1278.5" y1="563" x2="1278.5" y2="566" stroke="#000" stroke-width="1"/>
<line x1="34.5" y1="563" x2="34.5" y2="566" stroke="#000" stroke-width="1"/>
<line x1="34.5" y1="579" x2="34.5" y2="591" stroke="#000" stroke-width="1"/>
<line x1="203.5" y1="563" x2="203.5" y2="566" stroke="#000" stroke-width="1"/>
<line x1="203.5" y1="579" x2="203.5" y2="591" stroke="#000" stroke-width="1"/>
<line x1="379.5" y1="563" x2="379.5" y2="566" stroke="#000" stroke-width="1"/>
<line x1="379.5" y1="579" x2="379.5" y2="591" stroke="#000" stroke-width="1"/>
<line x1="540.5" y1="563" x2="540.5" y2="566" stroke="#000" stroke-width="1"/>
<line x1="540.5" y1="579" x2="540.5" y2="591" stroke="#000" stroke-width="1"/>
<line x1="716.5" y1="563" x2="716.5" y2="566" stroke="#000" stroke-width="1"/>
<line x1="716.5" y1="579" x2="716.5" y2="591" stroke="#000" stroke-width="1"/>
<line x1="877.5" y1="563" x2="877.5" y2="566" stroke="#000" stroke-width="1"/>
<line x1="877.5" y1="579" x2="877.5" y2="591" stroke="#000" stroke-width="1"/>
<line x1="1053.5" y1="563" x2="1053.5" y2="566" stroke="#000" stroke-width="1"/>
<line x1="1053.5" y1="579" x2="1053.5" y2="591" stroke="#000" stroke-width="1"/>
<line x1="1198.5" y1="563" x2="1198.5" y2="566" stroke="#000" stroke-width="1"/>
<line x1="1198.5" y1="579" x2="1198.5" y2="591" stroke="#000" stroke-width="1"/>
</g>
<text x="51.7" y="576" fill="#000" font-size="11" text-anchor="middle" textLength="11.7" lengthAdjust="spacingAndGlyphs" >05</text>
<text x="91.7" y="576" fill="#000" font-size="11" text-anchor="middle" textLength="11.7" lengthAdjust="spacingAndGlyphs" >13</text>
<text x="123.7" y="576" fill="#000" font-size="11" text-anchor="middle" textLength="11.7" lengthAdjust="spacingAndGlyphs" >19</text>
<text x="163.7" y="576" fill="#000" font-size="11" text-anchor="middle" textLength="11.7" lengthAdjust="spacingAndGlyphs" >26</text>
<text x="204.7" y="576" fill="#000" font-size="11" text-anchor="middle" textLength="11.7" lengthAdjust="spacingAndGlyphs" >02</text>
<text x="244.7" y="576" fill="#000" font-size="11" text-anchor="middle" textLength="11.7" lengthAdjust="spacingAndGlyphs" >09</text>
<text x="284.7" y="576" fill="#000" font-size="11" text-anchor="middle" textLength="11.7" lengthAdjust="spacingAndGlyphs" >16</text>
<text x="324.7" y="576" fill="#000" font-size="11" text-anchor="middle" textLength="11.7" lengthAdjust="spacingAndGlyphs" >23</text>
<text x="364.7" y="576" fill="#000" font-size="11" text-anchor="middle" textLength="11.7" lengthAdjust="spacingAndGlyphs" >30</text>
<text x="404.7" y="576" fill="#000" font-size="11" text-anchor="middle" textLength="11.7" lengthAdjust="spacingAndGlyphs" >06</text>
<text x="444.7" y="576" fill="#000" font-size="11" text-anchor="middle" textLength="11.7" lengthAdjust="spacingAndGlyphs" >13</text>
<text x="484.7" y="576" fill="#000" font-size="11" text-anchor="middle" textLength="11.7" lengthAdjust="spacingAndGlyphs" >20</text>
<text x="525.7" y="576" fill="#000" font-size="11" text-anchor="middle" textLength="11.7" lengthAdjust="spacingAndGlyphs" >27</text>
<text x="565.7" y="576" fill="#000" font-size="11" text-anchor="middle" textLength="11.7" lengthAdjust="spacingAndGlyphs" >06</text>
<text x="605.7" y="576" fill="#000" font-size="11" text-anchor="middle" textLength="11.7" lengthAdjust="spacingAndGlyphs" >13</text>
<text x="645.7" y="576" fill="#000" font-size="11" text-anchor="middle" textLength="11.7" lengthAdjust="spacingAndGlyphs" >20</text>
<text x="677.7" y="576" fill="#000" font-size="11" text-anchor="middle" textLength="11.7" lengthAdjust="spacingAndGlyphs" >27</text>
<text x="717.7" y="576" fill="#000" font-size="11" text-anchor="middle" textLength="11.7" lengthAdjust="spacingAndGlyphs" >03</text>
<text x="757.7" y="576" fill="#000" font-size="11" text-anchor="middle" textLength="11.7" lengthAdjust="spacingAndGlyphs" >10</text>
<text x="797.7" y="576" fill="#000" font-size="11" text-anchor="middle" textLength="11.7" lengthAdjust="spacingAndGlyphs" >17</text>
<text x="838.7" y="576" fill="#000" font-size="11" text-anchor="middle" textLength="11.7" lengthAdjust="spacingAndGlyphs" >24</text>
<text x="878.7" y="576" fill="#000" font-size="11" text-anchor="middle" textLength="11.7" lengthAdjust="spacingAndGlyphs" >02</text>
<text x="910.7" y="576" fill="#000" font-size="11" text-anchor="middle" textLength="11.7" lengthAdjust="spacingAndGlyphs" >08</text>
<text x="950.7" y="576" fill="#000" font-size="11" text-anchor="middle" textLength="11.7" lengthAdjust="spacingAndGlyphs" >15</text>
<text x="990.7" y="576" fill="#000" font-size="11" text-anchor="middle" textLength="11.7" lengthAdjust="spacingAndGlyphs" >22</text>
<text x="1030.7" y="576" fill="#000" font-size="11" text-anchor="middle" textLength="11.7" lengthAdjust="spacingAndGlyphs" >29</text>
<text x="1070.7" y="576" fill="#000" font-size="11" text-anchor="middle" textLength="11.7" lengthAdjust="spacingAndGlyphs" >05</text>
<text x="1110.7" y="576" fill="#000" font-size="11" text-anchor="middle" textLength="11.7" lengthAdjust="spacingAndGlyphs" >12</text>
<text x="1151.7" y="576" fill="#000" font-size="11" text-anchor="middle" textLength="11.7" lengthAdjust="spacingAndGlyphs" >19</text>
<text x="1183.7" y="576" fill="#000" font-size="11" text-anchor="middle" textLength="11.7" lengthAdjust="spacingAndGlyphs" >29</text>
<text x="1239.7" y="576" fill="#000" font-size="11" text-anchor="middle" textLength="11.7" lengthAdjust="spacingAndGlyphs" >10</text>
<text x="1279.7" y="576" fill="#000" font-size="11" text-anchor="middle" textLength="11.7" lengthAdjust="spacingAndGlyphs" >17</text>
<text x="74.3125" y="589" fill="#000" font-size="12" font-weight="bold" textLength="88" lengthAdjust="spacingAndGlyphs" >December 2016</text>
<text x="252.35" y="589" fill="#000" font-size="12" font-weight="bold" textLength="77" lengthAdjust="spacingAndGlyphs" >January 2017</text>
<text x="418.875" y="589" fill="#000" font-size="12" font-weight="bold" textLength="81" lengthAdjust="spacingAndGlyphs" >February 2017</text>
<text x="595.4" y="589" fill="#000" font-size="12" font-weight="bold" textLength="65" lengthAdjust="spacingAndGlyphs" >March 2017</text>
<text x="767.925" y="589" fill="#000" font-size="12" font-weight="bold" textLength="57" lengthAdjust="spacingAndGlyphs" >April 2017</text>
<text x="937.95" y="589" fill="#000" font-size="12" font-weight="bold" textLength="54" lengthAdjust="spacingAndGlyphs" >May 2017</text>
<text x="1096.95" y="589" fill="#000" font-size="12" font-weight="bold" textLength="57" lengthAdjust="spacingAndGlyphs" >June 2017</text>
<text x="1221.09" y="589" fill="#000" font-size="12" font-weight="bold" textLength="53" lengthAdjust="spacingAndGlyphs" >July 2017</text>
<g shape-rendering="crispEdges">
<rect x="2" y="591" width="35" height="17" fill="#f0f0f0" />
<rect x="1324" y="592" width="35" height="16" fill="#f0f0f0" />
<rect x="37" y="591" width="1252" height="17" fill="#c8c8c8" />
</g>
<rect x="4.5" y="592.5" width="14" height="14" rx="1.5" fill="#e6e6e6" stroke="#b0b0b0"/>
<path d="M11 595.8 L7.4 599.5 L11 603.2 M16 595.8 L12.4 599.5 L16 603.2" fill="none" stroke="#000" stroke-width="2.3"/>
<path d="M30 596 L26 599.5 L30 603 Z" fill="#505050"/>
<rect x="1290.5" y="592.5" width="33" height="14" rx="2" fill="#fff" stroke="#a8a8a8"/>
<text x="1291.3" y="602.8" fill="#000" font-size="9.2" textLength="30.5" lengthAdjust="spacingAndGlyphs" >160 DP</text>
<path d="M1332 596 L1336 599.5 L1332 603 Z" fill="#303030"/>
<rect x="1343.5" y="592.5" width="14" height="14" rx="1.5" fill="#e4e4e4" stroke="#a0a0a0"/>
<path d="M1346 595.8 L1349.6 599.5 L1346 603.2 M1351 595.8 L1354.6 599.5 L1351 603.2" fill="none" stroke="#000" stroke-width="2.3"/>
<g shape-rendering="crispEdges">
<rect x="0" y="0" width="1362" height="1" fill="#a0a0a0" />
<rect x="0" y="0" width="1" height="611" fill="#a0a0a0" />
<rect x="1" y="1" width="1361" height="1" fill="#646464" />
<rect x="1" y="1" width="1" height="610" fill="#646464" />
<rect x="1360" y="1" width="1" height="611" fill="#000" />
<rect x="1361" y="0" width="1" height="611" fill="#44444c" />
<rect x="1" y="609" width="1362" height="1" fill="#000" />
<rect x="0" y="610" width="1362" height="1" fill="#44444c" />
</g>
</svg>
</body></html>
